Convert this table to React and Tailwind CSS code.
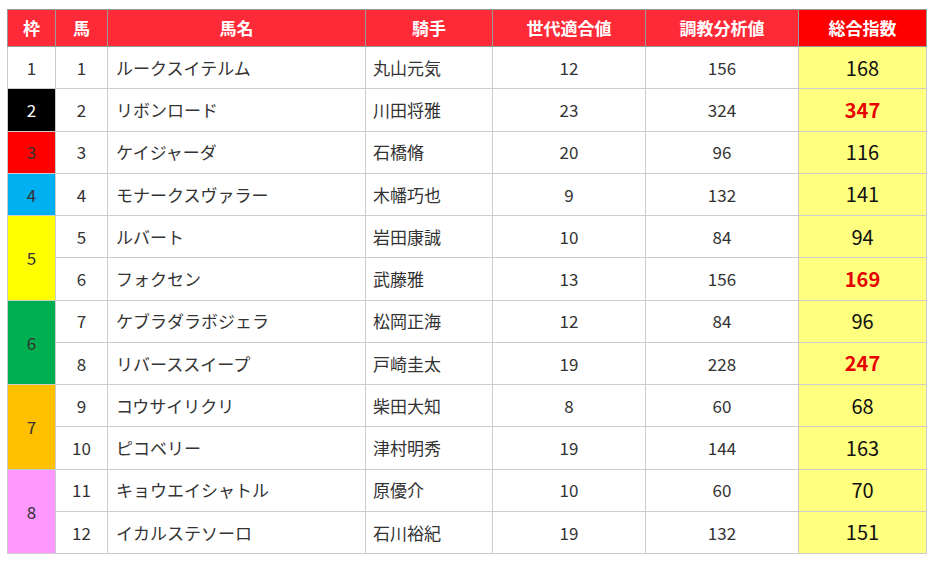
import React from "react";

const rows = [
  { waku: 1, uma: 1, name: "ルークスイテルム", jockey: "丸山元気", sedai: 12, chokyo: 156, total: 168 },
  { waku: 2, uma: 2, name: "リボンロード", jockey: "川田将雅", sedai: 23, chokyo: 324, total: 347, hot: true },
  { waku: 3, uma: 3, name: "ケイジャーダ", jockey: "石橋脩", sedai: 20, chokyo: 96, total: 116 },
  { waku: 4, uma: 4, name: "モナークスヴァラー", jockey: "木幡巧也", sedai: 9, chokyo: 132, total: 141 },
  { waku: 5, uma: 5, name: "ルバート", jockey: "岩田康誠", sedai: 10, chokyo: 84, total: 94 },
  { waku: 5, uma: 6, name: "フォクセン", jockey: "武藤雅", sedai: 13, chokyo: 156, total: 169, hot: true },
  { waku: 6, uma: 7, name: "ケブラダラボジェラ", jockey: "松岡正海", sedai: 12, chokyo: 84, total: 96 },
  { waku: 6, uma: 8, name: "リバーススイープ", jockey: "戸崎圭太", sedai: 19, chokyo: 228, total: 247, hot: true },
  { waku: 7, uma: 9, name: "コウサイリクリ", jockey: "柴田大知", sedai: 8, chokyo: 60, total: 68 },
  { waku: 7, uma: 10, name: "ピコベリー", jockey: "津村明秀", sedai: 19, chokyo: 144, total: 163 },
  { waku: 8, uma: 11, name: "キョウエイシャトル", jockey: "原優介", sedai: 10, chokyo: 60, total: 70 },
  { waku: 8, uma: 12, name: "イカルステソーロ", jockey: "石川裕紀", sedai: 19, chokyo: 132, total: 151 },
];

const wakuStyle = {
  1: "bg-white text-[#333]",
  2: "bg-black text-white",
  3: "bg-[#ff0000] text-[#333]",
  4: "bg-[#00b0f0] text-[#333]",
  5: "bg-[#ffff00] text-[#333]",
  6: "bg-[#00b050] text-[#333]",
  7: "bg-[#ffc000] text-[#333]",
  8: "bg-[#ff99ff] text-[#333]",
};

const th = "border border-[#999] h-[37px] text-[17px] font-bold text-white";
const td = "border border-[#ccc] text-[17px] text-[#333]";

export default function App() {
  return (
    <div className="bg-white w-[936px] h-[562px] pt-[9px] pl-[7px] font-['Noto_Sans_CJK_JP','Noto_Sans',sans-serif]">
      <table className="border-collapse table-fixed w-[919px]">
        <colgroup>
          <col className="w-[48px]" />
          <col className="w-[52px]" />
          <col className="w-[258px]" />
          <col className="w-[127px]" />
          <col className="w-[153px]" />
          <col className="w-[153px]" />
          <col className="w-[128px]" />
        </colgroup>
        <thead>
          <tr className="bg-[#ff2a37]">
            <th className={th}>枠</th>
            <th className={th}>馬</th>
            <th className={th}>馬名</th>
            <th className={th}>騎手</th>
            <th className={th}>世代適合値</th>
            <th className={th}>調教分析値</th>
            <th className={`${th} bg-[#ff0000]`}>総合指数</th>
          </tr>
        </thead>
        <tbody>
          {rows.map((r, i) => {
            const first = i === 0 || rows[i - 1].waku !== r.waku;
            const span = rows.filter((x) => x.waku === r.waku).length;
            return (
              <tr key={r.uma} className="h-[42.25px]">
                {first && (
                  <td rowSpan={span} className={`${td} text-center ${wakuStyle[r.waku]}`}>
                    {r.waku}
                  </td>
                )}
                <td className={`${td} text-center`}>{r.uma}</td>
                <td className={`${td} pl-[8px]`}>{r.name}</td>
                <td className={`${td} pl-[7px]`}>{r.jockey}</td>
                <td className={`${td} text-center`}>{r.sedai}</td>
                <td className={`${td} text-center`}>{r.chokyo}</td>
                <td
                  className={`border border-[#ccc] bg-[#ffff80] text-center text-[20px] ${
                    r.hot ? "font-bold text-[#e60000]" : "text-[#111]"
                  }`}
                >
                  {r.total}
                </td>
              </tr>
            );
          })}
        </tbody>
      </table>
    </div>
  );
}
